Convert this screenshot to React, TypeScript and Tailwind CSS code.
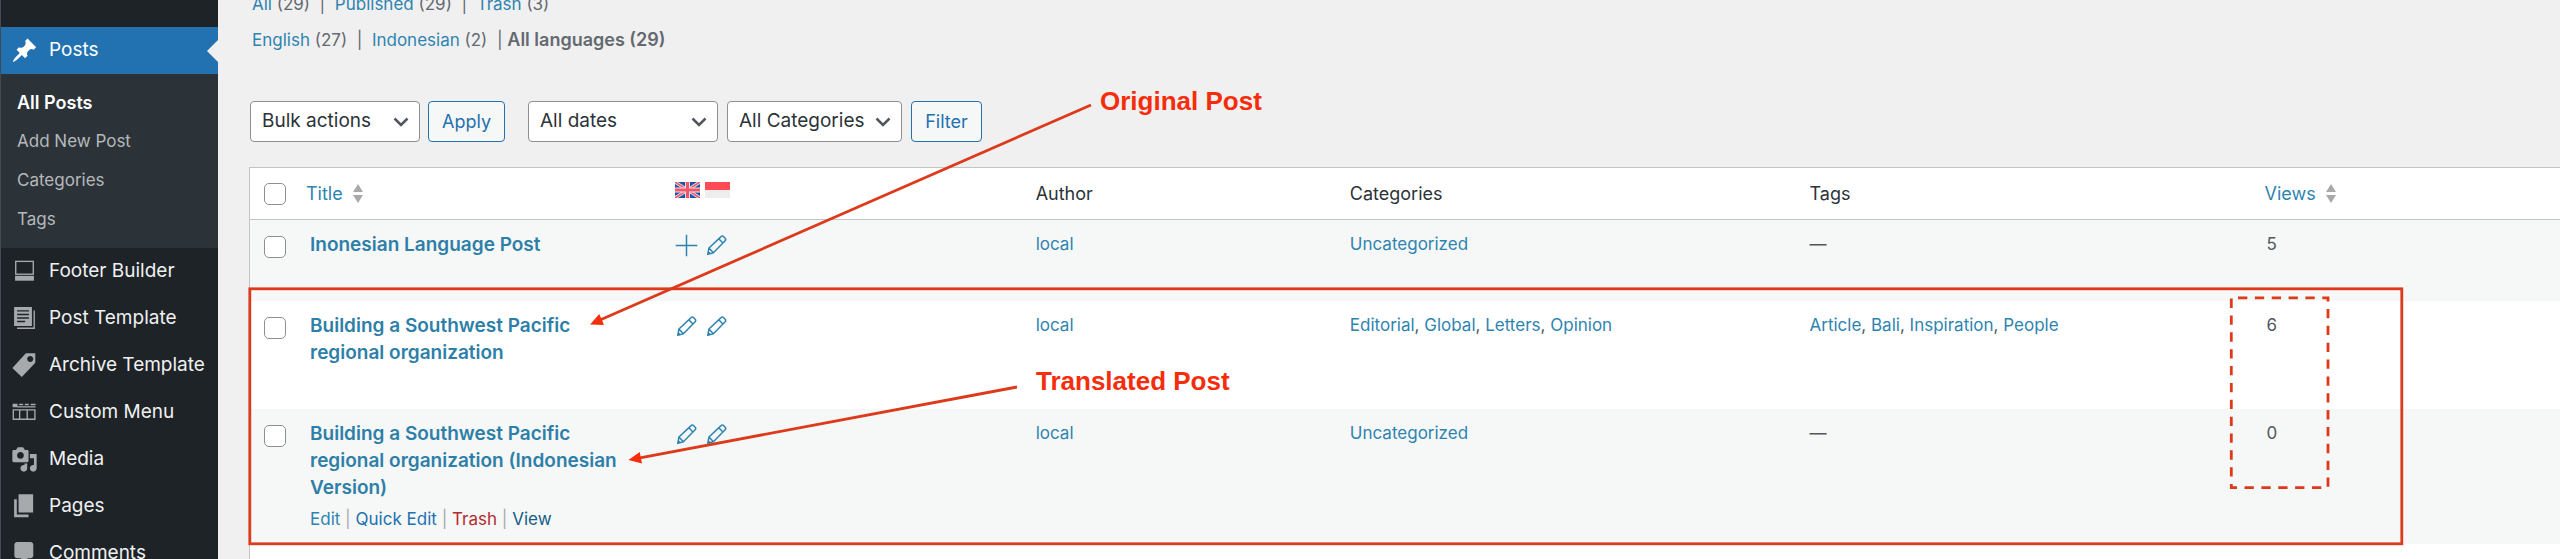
import React from "react";

type IconProps = { className?: string };

type Post = {
  id: number;
  title: string;
  languages: ("add" | "edit")[];
  author: string;
  categories: string[];
  tags: string[];
  views: number;
  active?: boolean;
};

const posts: Post[] = [
  {
    id: 1,
    title: "Inonesian Language Post",
    languages: ["add", "edit"],
    author: "local",
    categories: ["Uncategorized"],
    tags: [],
    views: 5,
  },
  {
    id: 2,
    title: "Building a Southwest Pacific regional organization",
    languages: ["edit", "edit"],
    author: "local",
    categories: ["Editorial", "Global", "Letters", "Opinion"],
    tags: ["Article", "Bali", "Inspiration", "People"],
    views: 6,
  },
  {
    id: 3,
    title: "Building a Southwest Pacific regional organization (Indonesian Version)",
    languages: ["edit", "edit"],
    author: "local",
    categories: ["Uncategorized"],
    tags: [],
    views: 0,
    active: true,
  },
];

const PinIcon = ({ className }: IconProps) => (
  <svg viewBox="0 0 20 20" fill="currentColor" className={className}>
    <path d="M10.44 3.02l1.82-1.82 6.36 6.35-1.83 1.82c-1.05-.68-2.48-.57-3.41.36l-.75.75c-.92.93-1.04 2.35-.35 3.41l-1.83 1.82-2.41-2.41-2.8 2.79c-.42.42-3.38 2.71-3.8 2.29s1.86-3.39 2.28-3.81l2.79-2.79L4.1 9.36l1.83-1.82c1.05.69 2.48.57 3.4-.36l.75-.75c.93-.92 1.05-2.35.36-3.41z" />
  </svg>
);

const FooterIcon = ({ className }: IconProps) => (
  <svg viewBox="0 0 20 20" className={className}>
    <rect x="3.5" y="2.5" width="13" height="9.5" fill="none" stroke="currentColor" />
    <rect x="3" y="13.2" width="14" height="3.6" fill="currentColor" />
  </svg>
);

const PostTemplateIcon = ({ className }: IconProps) => (
  <svg viewBox="0 0 20 20" className={className}>
    <path
      fill="currentColor"
      fillRule="evenodd"
      d="M2.3 1.5h13.2v14H2.3zM4.5 3.8v1.1h8.8V3.8zm0 2.6v1.1h8.8V6.4zm0 2.6v1.1h8.8V9zm0 2.7v1.1h6v-1.1z"
    />
    <path fill="none" stroke="currentColor" d="M17.2 4v13.2H4.5" />
  </svg>
);

const TagIcon = ({ className }: IconProps) => (
  <svg viewBox="0 0 20 20" fill="currentColor" className={className}>
    <path d="M11 1h7v7L8 18.5 1 11.8zm3.2 6.4c1.3 0 2.3-1 2.3-2.2s-1-2.2-2.3-2.2-2.2 1-2.2 2.2 1 2.2 2.2 2.2z" />
  </svg>
);

const MenuIcon = ({ className }: IconProps) => (
  <svg viewBox="0 0 20 20" className={className}>
    <path fill="currentColor" d="M1.2 3.6h3.6v2.6H1.2zM6 3.6h3v1H6zM10.2 3.6h3v1h-3zM14.6 3.6h3.6v1h-3.6zM4.5 5.4h13.7v.9H4.5z" />
    <path fill="none" stroke="currentColor" d="M1.7 8h16v7h-16zM6.4 8v7M12 8v7" />
  </svg>
);

const MediaIcon = ({ className }: IconProps) => (
  <svg viewBox="0 0 20 20" fill="currentColor" className={className}>
    <path d="M13 11V4c0-.55-.45-1-1-1h-1.67L9 1H5L3.67 3H2c-.55 0-1 .45-1 1v7c0 .55.45 1 1 1h10c.55 0 1-.45 1-1zM7 4.5c1.38 0 2.5 1.12 2.5 2.5S8.38 9.5 7 9.5 4.5 8.38 4.5 7 5.62 4.5 7 4.5zM14 6h5v10.5c0 1.38-1.12 2.5-2.5 2.5S14 17.88 14 16.5s1.12-2.5 2.5-2.5c.17 0 .34.02.5.05V9h-3V6zm-4 8.05V13h2v3.5c0 1.38-1.12 2.5-2.5 2.5S7 17.88 7 16.5 8.12 14 9.5 14c.17 0 .34.02.5.05z" />
  </svg>
);

const PagesIcon = ({ className }: IconProps) => (
  <svg viewBox="0 0 20 20" fill="currentColor" className={className}>
    <path d="M5.6 14.5V1h10.8v13.5zM4.3 16H13v2H2.3V4.6h2z" />
  </svg>
);

const CommentsIcon = ({ className }: IconProps) => (
  <svg viewBox="0 0 20 20" fill="currentColor" className={className}>
    <path d="M4.5 1.5h10c1.1 0 2 .9 2 2v8c0 1.1-.9 2-2 2h-2l-5 5v-5h-3c-1.1 0-2-.9-2-2v-8c0-1.1.9-2 2-2z" />
  </svg>
);

const PencilIcon = ({ className }: IconProps) => (
  <svg
    viewBox="0 0 20 20"
    fill="none"
    stroke="currentColor"
    strokeWidth="1.1"
    strokeLinejoin="round"
    className={className}
  >
    <path d="M3.5 16.6l.9-4.7 9-8.5c.6-.6 1.2-.6 1.8 0l1.2 1.3c.6.6.6 1.2 0 1.8l-8.7 8.9zM4.4 11.9l3.3 3.5M11.7 5l3.2 3.4M3.5 16.6l1.6-1.6" />
  </svg>
);

const PlusIcon = ({ className }: IconProps) => (
  <svg viewBox="0 0 20 20" stroke="currentColor" strokeWidth="1.1" className={className}>
    <path d="M10 2v16M2 10h16" />
  </svg>
);

const SortIcon = () => (
  <svg viewBox="0 0 10 19" fill="#a7aaad" className="h-[19px] w-[10px]">
    <path d="M5 0l5 8H0zM5 19l5-8H0z" />
  </svg>
);

const FlagUk = () => (
  <svg viewBox="0 0 25 16" className="h-4 w-[25px]" role="img" aria-label="English">
    <path fill="#2450a0" d="M0 0h25v16H0z" />
    <path stroke="#e8e4f0" strokeWidth="3.2" d="M0 0l25 16M25 0L0 16" />
    <path stroke="#f0566a" strokeWidth="1.6" d="M0 0l25 16M25 0L0 16" />
    <path stroke="#f4e4ea" strokeWidth="4.8" d="M12.5 0v16M0 8h25" />
    <path stroke="#f0566a" strokeWidth="3" d="M12.5 0v16M0 8h25" />
  </svg>
);

const FlagId = () => (
  <svg viewBox="0 0 25 16" className="h-4 w-[25px]" role="img" aria-label="Indonesian">
    <path fill="#eeeeee" d="M0 0h25v16H0z" />
    <path fill="#ff4b55" d="M0 0h25v8H0z" />
  </svg>
);

const subMenu = ["All Posts", "Add New Post", "Categories", "Tags"];

const menu = [
  { label: "Footer Builder", icon: FooterIcon },
  { label: "Post Template", icon: PostTemplateIcon },
  { label: "Archive Template", icon: TagIcon },
  { label: "Custom Menu", icon: MenuIcon },
  { label: "Media", icon: MediaIcon },
  { label: "Pages", icon: PagesIcon },
  { label: "Comments", icon: CommentsIcon },
];

const Sidebar = () => (
  <nav className="w-[218px] shrink-0 border-l border-[#434a50] bg-[#1d2327] pt-[27px] text-[19px] text-[#f0f0f1]">
    <a href="#posts" className="relative flex h-[47px] items-center gap-[11px] bg-[#2271b1] pl-[10px] text-white">
      <PinIcon className="size-[27px]" />
      Posts
      <span className="absolute right-0 border-y-[11px] border-r-[11px] border-y-transparent border-r-[#f0f0f1]" />
    </a>
    <ul className="bg-[#2c3338] pt-[9px] pb-[9px] text-[17px]">
      {subMenu.map((label, index) => (
        <li key={label}>
          <a
            href="#posts"
            className={
              index === 0
                ? "block pl-4 text-[18px] leading-[39px] font-semibold text-white"
                : "block pl-4 leading-[39px] text-[#b5b8bb]"
            }
          >
            {label}
          </a>
        </li>
      ))}
    </ul>
    <ul>
      {menu.map(({ label, icon: Icon }) => (
        <li key={label}>
          <a href="#menu" className="flex h-[47px] items-center gap-[11px] pl-[10px] whitespace-nowrap">
            <Icon className="size-[27px] shrink-0 text-[#a7aaad]" />
            {label}
          </a>
        </li>
      ))}
    </ul>
  </nav>
);

const Filters = () => {
  const link = "text-[#2e84b0]";
  return (
    <div className="-mt-[13px] pl-[3px] text-[17px] leading-[35px] whitespace-pre text-[#646970]">
      <div>
        <a href="#all" className={link}>All</a> (29)  |  <a href="#published" className={link}>Published</a> (29)  |  <a href="#trash" className={link}>Trash</a> (3)
      </div>
      <div>
        <a href="#en" className={link}>English</a> (27)  |  <a href="#id" className={link}>Indonesian</a> (2)  | <b className="text-[18px] font-semibold">All languages (29)</b>
      </div>
    </div>
  );
};

const Select = ({ label, width }: { label: string; width: string }) => (
  <div className={`relative ${width}`}>
    <select
      aria-label={label}
      className="h-[41px] w-full appearance-none rounded-[4px] border border-[#8c8f94] bg-white pl-[11px] text-[19px] text-[#2c3338]"
    >
      <option>{label}</option>
    </select>
    <svg
      viewBox="0 0 16 10"
      fill="none"
      stroke="#50575e"
      strokeWidth="2.5"
      className="pointer-events-none absolute top-4 right-[11px] h-[10px] w-4"
    >
      <path d="M1.5 1.5L8 8l6.5-6.5" />
    </svg>
  </div>
);

const buttonClass =
  "h-[41px] rounded-[4px] border border-[#2271b1] bg-[#f6f7f7] text-[18px] text-[#2271b1]";

const Toolbar = () => (
  <div className="mt-[43px] flex pl-px">
    <Select label="Bulk actions" width="w-[170px]" />
    <button className={`${buttonClass} ml-2 w-[77px]`}>Apply</button>
    <div className="ml-[23px] flex gap-[9px]">
      <Select label="All dates" width="w-[190px]" />
      <Select label="All Categories" width="w-[175px]" />
      <button className={`${buttonClass} w-[71px]`}>Filter</button>
    </div>
  </div>
);

const Checkbox = ({ label }: { label: string }) => (
  <input
    type="checkbox"
    aria-label={label}
    className="block size-[22px] appearance-none rounded-[5px] border border-[#8c8f94] bg-white"
  />
);

const Terms = ({ names }: { names: string[] }) => {
  if (names.length === 0) return <>—</>;
  return (
    <>
      {names.map((name, index) => (
        <React.Fragment key={name}>
          {index > 0 && ", "}
          <a href="#term" className="text-[#2e84b0]">{name}</a>
        </React.Fragment>
      ))}
    </>
  );
};

const PostRow = ({ post }: { post: Post }) => (
  <tr className="align-top odd:bg-[#f6f7f7]">
    <td className="pt-4 pl-[14px]">
      <Checkbox label={`Select ${post.title}`} />
    </td>
    <td className="pt-[11px] pr-7 pb-3 pl-4">
      <a href="#post" className="block text-[19px] font-semibold text-[#2e7fa8]">
        {post.title}
      </a>
      <div
        className={
          post.active
            ? "mt-[6px] leading-[25px] text-[#a7aaad]"
            : "invisible mt-[6px] leading-[25px]"
        }
      >
        <a href="#edit" className="text-[#2e84b0]">Edit</a> |{" "}
        <button className="text-[#2271b1]">Quick Edit</button> |{" "}
        <a href="#trash" className="text-[#b32d2e]">Trash</a> |{" "}
        <a href="#view" className="text-[#135e86]">View</a>
      </div>
    </td>
    <td className="px-3 pt-3">
      <div className="flex gap-[3px] text-[#2e84b0]">
        {post.languages.map((kind, index) => (
          <a href="#translate" key={index} aria-label={kind}>
            {kind === "add" ? <PlusIcon className="size-[27px]" /> : <PencilIcon className="size-[27px]" />}
          </a>
        ))}
      </div>
    </td>
    <td className="px-[14px] pt-[11px]">
      <Terms names={[post.author]} />
    </td>
    <td className="px-[14px] pt-[11px]">
      <Terms names={post.categories} />
    </td>
    <td className="px-[14px] pt-[11px]">
      <Terms names={post.tags} />
    </td>
    <td className="pt-[11px] pl-4">{post.views}</td>
  </tr>
);

const PostTable = () => (
  <table className="mt-[25px] w-full table-fixed border-separate border-spacing-0 border-t border-l border-[#c3c4c7] bg-white text-[17px] leading-[27px] text-[#50575e]">
    <colgroup>
      <col className="w-[44px]" />
      <col className="w-[15.9%]" />
      <col className="w-[15.6%]" />
      <col className="w-[13.6%]" />
      <col className="w-[19.9%]" />
      <col className="w-[19.7%]" />
      <col />
    </colgroup>
    <thead className="text-left text-[18px] text-[#2c3338] [&_th]:h-[52px] [&_th]:border-b [&_th]:border-[#c3c4c7] [&_th]:font-normal">
      <tr>
        <th className="pl-[14px]">
          <Checkbox label="Select all" />
        </th>
        <th className="px-3">
          <a href="#title" className="flex items-center gap-[10px] text-[#2e84b0]">
            Title <SortIcon />
          </a>
        </th>
        <th className="px-[14px] pb-2">
          <span className="flex gap-[5px]">
            <FlagUk />
            <FlagId />
          </span>
        </th>
        <th className="px-[14px]">Author</th>
        <th className="px-[14px]">Categories</th>
        <th className="px-[14px]">Tags</th>
        <th className="px-[14px]">
          <a href="#views" className="flex items-center gap-[10px] text-[#2e84b0]">
            Views <SortIcon />
          </a>
        </th>
      </tr>
    </thead>
    <tbody>
      {posts.map((post) => (
        <PostRow key={post.id} post={post} />
      ))}
    </tbody>
  </table>
);

// Arrows and boxes drawn on top of the screen
const Annotations = () => (
  <div className="pointer-events-none absolute top-0 left-0 font-['Liberation_Sans',sans-serif] text-[26px] leading-[30px] font-bold whitespace-nowrap text-[#f62d0c]">
    <svg width="2560" height="559" fill="none" stroke="#dc3a1a" strokeWidth="2.8" className="max-w-none">
      <rect x="249.8" y="288.8" width="2152" height="255" />
      <path
        strokeDasharray="9.3 7.56"
        d="M2238 297.8H2328V487.7H2231.3V297.8H2238"
      />
      <path d="M1091 105L600 320M1017 387L640 457.8" />
      <path fill="#f62d0c" stroke="none" d="M590 324.5l9.3-10.5 4.7 11zM628.5 460l11.2-8 2.3 11.5z" />
    </svg>
    <span className="absolute top-[86px] left-[1100px]">Original Post</span>
    <span className="absolute top-[366px] left-[1036px]">Translated Post</span>
  </div>
);

const App = () => {
  return (
    <div className="relative flex h-screen overflow-hidden bg-[#f0f0f1] font-['Inter',sans-serif]">
      <Sidebar />
      <main className="min-w-0 flex-1 pl-[31px]">
        <Filters />
        <Toolbar />
        <PostTable />
        <div className="h-20 border-l border-[#c3c4c7] bg-white" />
      </main>
      <Annotations />
    </div>
  );
};

export default App;
